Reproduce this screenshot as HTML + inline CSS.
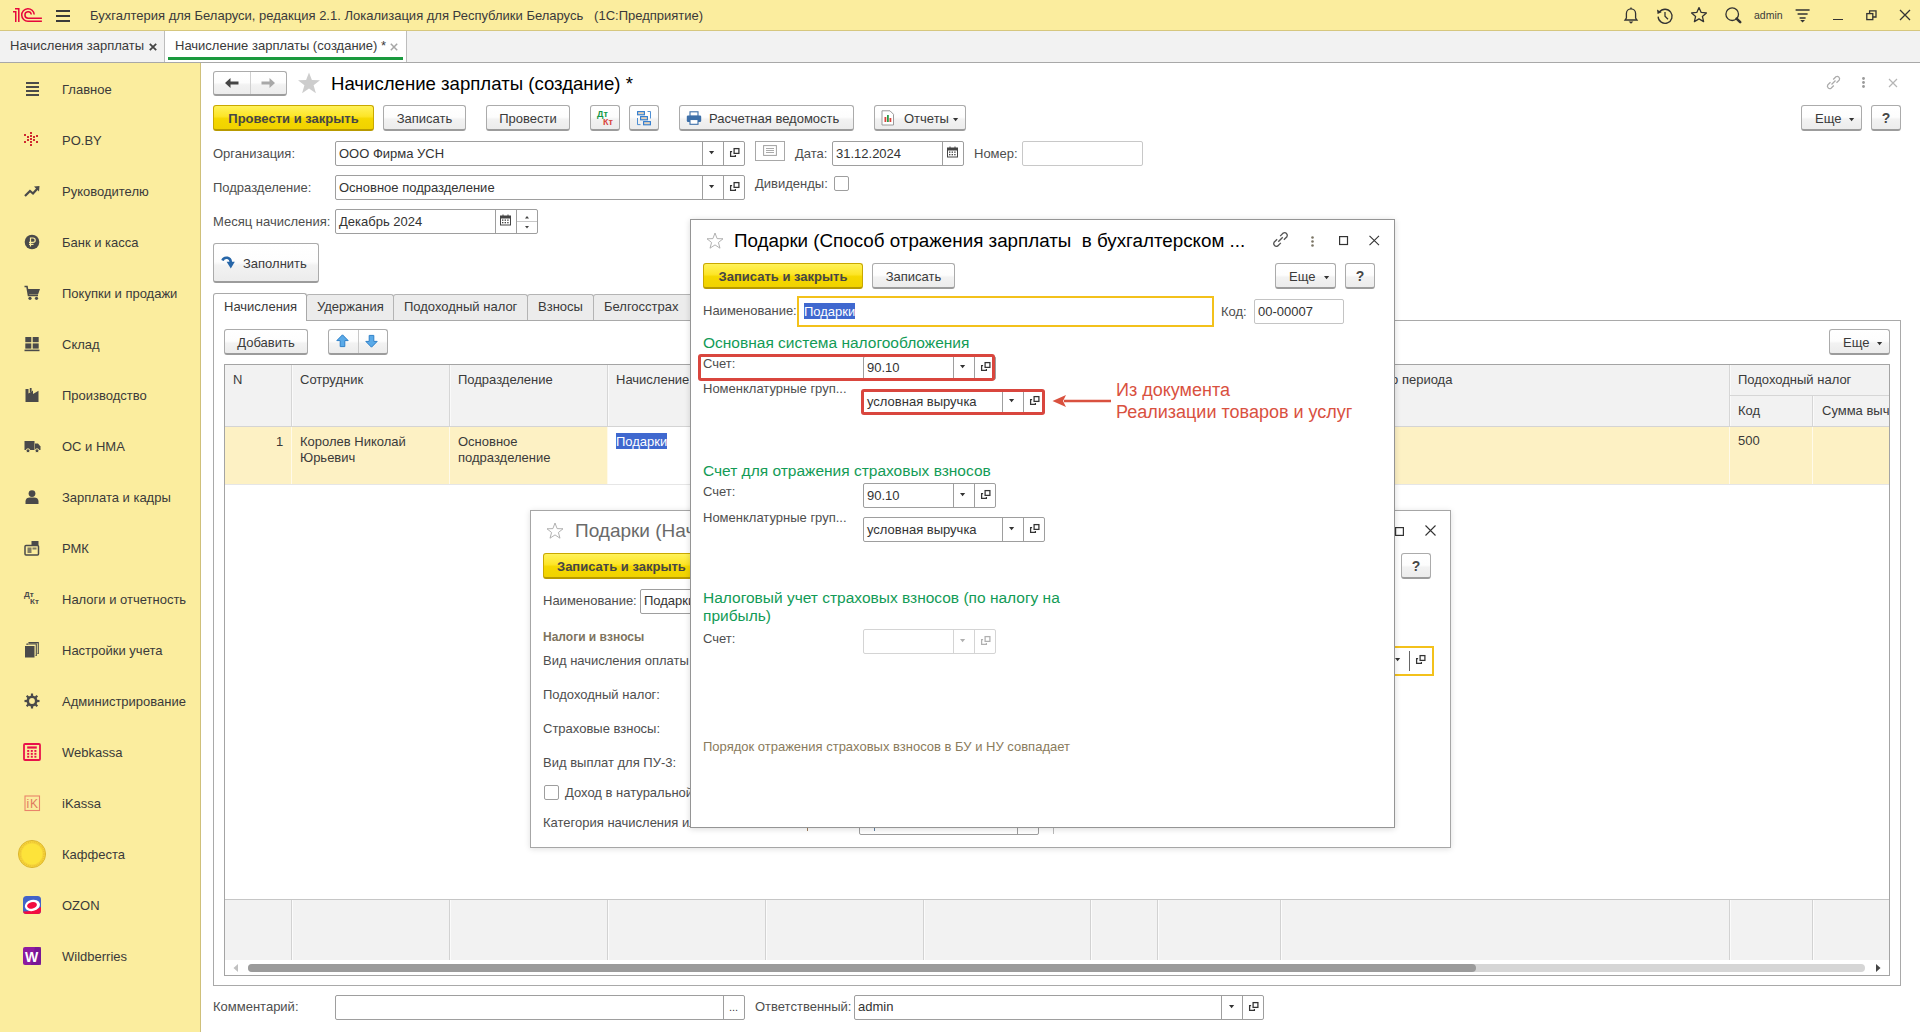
<!DOCTYPE html><html><head><meta charset="utf-8"><style>
*{box-sizing:border-box}
html,body{margin:0;padding:0}
body{width:1920px;height:1032px;position:relative;overflow:hidden;font-family:"Liberation Sans",sans-serif;font-size:13px;color:#333;background:#fff}
.a{position:absolute}
svg.a{overflow:visible}
.t{position:absolute;white-space:pre}
.btn{position:absolute;border:1px solid #ababab;border-bottom:2px solid #9c9c9c;border-radius:3px;background:linear-gradient(#ffffff 0%,#fdfdfd 48%,#f2f2f2 58%,#ececec 100%)}
.ybtn{position:absolute;border:1px solid #c9a800;border-bottom:2px solid #b89a00;border-radius:3px;background:linear-gradient(#fff25a 0%,#fde528 45%,#f5d800 55%,#f0d200 100%)}
</style></head><body>
<div class="a" style="left:0px;top:0px;width:1920px;height:30px;background:#fbed9e"></div>
<div class="a" style="left:0px;top:30px;width:1920px;height:1px;background:#d6c77e"></div>
<svg class="a" style="left:12px;top:7px;" width="32" height="17" viewBox="0 0 32 17"><g fill="none" stroke="#e6063c" stroke-width="1.5">
      <path d="M1 4.75 L3.75 4.75 L3.75 14.9"/><path d="M3 1.8 L6.8 1.8 L6.8 14.9"/>
      <path d="M22.2 7.5 A6.25 6.25 0 1 0 16 14.2 L29.9 14.2"/>
      <path d="M19.3 7.5 A3.2 3.2 0 1 0 16.1 11.2 L29.9 11.2"/>
    </g></svg>
<div class="a" style="left:56px;top:10px;width:14px;height:2px;background:#3a3a3a;height:1.6px"></div>
<div class="a" style="left:56px;top:15px;width:14px;height:2px;background:#3a3a3a;height:1.6px"></div>
<div class="a" style="left:56px;top:20px;width:14px;height:2px;background:#3a3a3a;height:1.6px"></div>
<div class="t" style="left:90px;top:8px;font-size:13px;line-height:15px;color:#3a3a3a;font-weight:normal;">Бухгалтерия для Беларуси, редакция 2.1. Локализация для Республики Беларусь   (1С:Предприятие)</div>
<svg class="a" style="left:1622px;top:6px;" width="18" height="18" viewBox="0 0 18 18"><g fill="none" stroke="#333" stroke-width="1.3"><path d="M3 14 L15 14 L13.6 12 L13.6 7.5 A4.6 4.6 0 0 0 4.4 7.5 L4.4 12 Z"/><path d="M9 1.5 L9 2.9"/></g><path d="M6.6 15.6 L11.4 15.6 L9 17.8 Z" fill="#333"/></svg>
<svg class="a" style="left:1656px;top:7px;" width="18" height="18" viewBox="0 0 18 18"><g fill="none" stroke="#333" stroke-width="1.3"><path d="M3.4 5.2 A7 7 0 1 1 2.1 9.6"/><path d="M9 5 L9 9.3 L12 12.2"/></g><path d="M1 2.6 L5.6 5.2 L1.6 7 Z" fill="#333"/></svg>
<svg class="a" style="left:1690px;top:6px;" width="18" height="18" viewBox="0 0 18 18"><g fill="none" stroke="#333" stroke-width="1.3" stroke-linejoin="round"><path d="M9 1.6 L11.2 6.4 L16.4 6.9 L12.4 10.4 L13.6 15.6 L9 12.9 L4.4 15.6 L5.6 10.4 L1.6 6.9 L6.8 6.4 Z"/></g></svg>
<svg class="a" style="left:1725px;top:7px;" width="18" height="18" viewBox="0 0 18 18"><g fill="none" stroke="#333" stroke-width="1.3"><circle cx="7.2" cy="7.2" r="6.3"/></g><path d="M11.6 11.6 L15.2 15.2" stroke="#333" stroke-width="2.6" stroke-linecap="round"/></svg>
<div class="t" style="left:1754px;top:9px;font-size:10.5px;line-height:12px;color:#3a3a3a;font-weight:normal;">admin</div>
<svg class="a" style="left:1795px;top:9px;" width="16" height="14" viewBox="0 0 16 14"><g fill="none" stroke="#333" stroke-width="1.3"><path d="M0.6 1 L14.6 1 M2.6 5 L12.6 5 M4.6 9 L10.6 9"/></g><path d="M5.2 11 L10 11 L7.6 13.6 Z" fill="#333"/></svg>
<div class="a" style="left:1833px;top:19px;width:10px;height:1px;background:#333;height:1.4px"></div>
<svg class="a" style="left:1866px;top:10px;" width="11" height="11" viewBox="0 0 11 11"><g fill="none" stroke="#333" stroke-width="1.3"><rect x="0.8" y="3.6" width="6" height="6"/><path d="M3.6 3.6 L3.6 0.8 L10 0.8 L10 7 L6.8 7"/></g></svg>
<svg class="a" style="left:1899px;top:9px;" width="12" height="12" viewBox="0 0 12 12"><g fill="none" stroke="#333" stroke-width="1.3"><path d="M1 1 L11 11 M11 1 L1 11"/></g></svg>
<div class="a" style="left:0px;top:31px;width:1920px;height:31px;background:#f2f2f2"></div>
<div class="a" style="left:0px;top:62px;width:1920px;height:1px;background:#a8a8a8"></div>
<div class="t" style="left:10px;top:38px;font-size:13px;line-height:15px;color:#3a3a3a;font-weight:normal;">Начисления зарплаты</div>
<svg class="a" style="left:149px;top:43px;" width="8" height="8" viewBox="0 0 8 8"><path d="M0.8 0.8 L7.2 7.2 M7.2 0.8 L0.8 7.2" stroke="#444" stroke-width="1.8"/></svg>
<div class="a" style="left:164px;top:31px;width:1px;height:31px;background:#bdbdbd"></div>
<div class="a" style="left:165px;top:31px;width:241px;height:31px;background:#fff"></div>
<div class="t" style="left:175px;top:38px;font-size:13px;line-height:15px;color:#3a3a3a;font-weight:normal;">Начисление зарплаты (создание) *</div>
<svg class="a" style="left:390px;top:43px;" width="8" height="8" viewBox="0 0 8 8"><path d="M0.8 0.8 L7.2 7.2 M7.2 0.8 L0.8 7.2" stroke="#a6a6a6" stroke-width="1.5"/></svg>
<div class="a" style="left:168px;top:57px;width:235px;height:3px;background:#1a9a3e"></div>
<div class="a" style="left:406px;top:31px;width:1px;height:31px;background:#bdbdbd"></div>
<div class="a" style="left:0px;top:63px;width:200px;height:969px;background:#fbed9e"></div>
<div class="a" style="left:200px;top:63px;width:1px;height:969px;background:#cfc07a"></div>
<div class="t" style="left:62px;top:82px;font-size:13px;line-height:15px;color:#3a3a3a;font-weight:normal;">Главное</div>
<div class="a" style="left:26px;top:82px;width:13px;height:2px;background:#4a4a4a"></div>
<div class="a" style="left:26px;top:86px;width:13px;height:2px;background:#4a4a4a"></div>
<div class="a" style="left:26px;top:90px;width:13px;height:2px;background:#4a4a4a"></div>
<div class="a" style="left:26px;top:94px;width:13px;height:2px;background:#4a4a4a"></div>
<div class="t" style="left:62px;top:133px;font-size:13px;line-height:15px;color:#3a3a3a;font-weight:normal;">PO.BY</div>
<svg class="a" style="left:20px;top:128px;" width="24" height="24" viewBox="0 0 24 24"><rect x="10" y="4" width="2" height="2" fill="#cf2b31"/><rect x="4" y="6" width="2" height="2" fill="#cf2b31"/><rect x="16" y="7" width="2" height="2" fill="#cf2b31"/><rect x="7" y="8" width="2" height="2" fill="#cf2b31"/><rect x="10" y="7" width="2" height="2" fill="#cf2b31"/><rect x="13" y="8" width="2" height="2" fill="#cf2b31"/><rect x="10" y="10" width="2" height="2" fill="#cf2b31"/><rect x="7" y="11" width="2" height="2" fill="#cf2b31"/><rect x="13" y="11" width="2" height="2" fill="#cf2b31"/><rect x="4" y="13" width="2" height="2" fill="#cf2b31"/><rect x="10" y="13" width="2" height="2" fill="#cf2b31"/><rect x="16" y="13" width="2" height="2" fill="#cf2b31"/><rect x="10" y="16" width="2" height="2" fill="#cf2b31"/></svg>
<div class="t" style="left:62px;top:184px;font-size:13px;line-height:15px;color:#3a3a3a;font-weight:normal;">Руководителю</div>
<svg class="a" style="left:24px;top:183px;" width="16" height="16" viewBox="0 0 16 16"><path d="M1 13 L6 8 L9 10.5 L13.5 5.5" fill="none" stroke="#4a4a4a" stroke-width="2.2"/><path d="M10 3.5 L15.5 3 L15 8.5 Z" fill="#4a4a4a"/></svg>
<div class="t" style="left:62px;top:235px;font-size:13px;line-height:15px;color:#3a3a3a;font-weight:normal;">Банк и касса</div>
<svg class="a" style="left:24px;top:234px;" width="16" height="16" viewBox="0 0 16 16"><circle cx="8" cy="8" r="7.3" fill="#4a4a4a"/><path d="M6.5 12.5 L6.5 4 L9 4 A2.2 2.2 0 0 1 9 8.4 L5 8.4 M5 10.4 L9.5 10.4" fill="none" stroke="#fbed9e" stroke-width="1.2"/></svg>
<div class="t" style="left:62px;top:286px;font-size:13px;line-height:15px;color:#3a3a3a;font-weight:normal;">Покупки и продажи</div>
<svg class="a" style="left:24px;top:285px;" width="17" height="16" viewBox="0 0 17 16"><path d="M0.5 1.5 L3 1.5 L4.5 10.5 L14 10.5" fill="none" stroke="#4a4a4a" stroke-width="1.6"/><path d="M3.5 4 L16 4 L14 9.5 L4.5 9.5 Z" fill="#4a4a4a"/><circle cx="6" cy="13.3" r="1.6" fill="#4a4a4a"/><circle cx="12.5" cy="13.3" r="1.6" fill="#4a4a4a"/></svg>
<div class="t" style="left:62px;top:337px;font-size:13px;line-height:15px;color:#3a3a3a;font-weight:normal;">Склад</div>
<svg class="a" style="left:24px;top:336px;" width="16" height="16" viewBox="0 0 16 16"><rect x="1.3" y="1" width="6" height="5.2" fill="#4a4a4a"/><rect x="8.7" y="1" width="6" height="5.2" fill="#4a4a4a"/><rect x="1.3" y="7.4" width="6" height="5.2" fill="#4a4a4a"/><rect x="8.7" y="7.4" width="6" height="5.2" fill="#4a4a4a"/><rect x="0.5" y="13.6" width="15" height="1.6" fill="#4a4a4a"/></svg>
<div class="t" style="left:62px;top:388px;font-size:13px;line-height:15px;color:#3a3a3a;font-weight:normal;">Производство</div>
<svg class="a" style="left:24px;top:387px;" width="16" height="16" viewBox="0 0 16 16"><path d="M1.5 15 L1.5 2 L4.5 2 L4.5 6.5 L9 3.5 L9 7 L14.5 3.8 L14.5 15 Z" fill="#4a4a4a"/><path d="M5.8 1 L7.6 1 L7.6 4.4 L5.8 5.5 Z" fill="#4a4a4a"/></svg>
<div class="t" style="left:62px;top:439px;font-size:13px;line-height:15px;color:#3a3a3a;font-weight:normal;">ОС и НМА</div>
<svg class="a" style="left:24px;top:438px;" width="17" height="16" viewBox="0 0 17 16"><rect x="0.5" y="3" width="10" height="9" fill="#4a4a4a"/><path d="M11 5.5 L14 5.5 L16.5 8.5 L16.5 12 L11 12 Z" fill="#4a4a4a"/><circle cx="4" cy="12.8" r="2" fill="#4a4a4a" stroke="#fbed9e" stroke-width="1"/><circle cx="13" cy="12.8" r="2" fill="#4a4a4a" stroke="#fbed9e" stroke-width="1"/></svg>
<div class="t" style="left:62px;top:490px;font-size:13px;line-height:15px;color:#3a3a3a;font-weight:normal;">Зарплата и кадры</div>
<svg class="a" style="left:24px;top:489px;" width="16" height="16" viewBox="0 0 16 16"><circle cx="8" cy="4.6" r="3.4" fill="#4a4a4a"/><path d="M1.5 15 L1.5 12 Q2 8.6 6 8.6 L10 8.6 Q14 8.6 14.5 12 L14.5 15 Z" fill="#4a4a4a"/></svg>
<div class="t" style="left:62px;top:541px;font-size:13px;line-height:15px;color:#3a3a3a;font-weight:normal;">РМК</div>
<svg class="a" style="left:24px;top:540px;" width="16" height="16" viewBox="0 0 16 16"><rect x="1" y="5.5" width="13.5" height="9.5" rx="1" fill="none" stroke="#4a4a4a" stroke-width="1.5"/><rect x="7.5" y="1" width="7" height="4" fill="#4a4a4a"/><rect x="3.5" y="7.5" width="4" height="5.5" fill="#4a4a4a" opacity=".7"/><rect x="8.5" y="7.5" width="4" height="2" fill="#4a4a4a" opacity=".7"/></svg>
<div class="t" style="left:62px;top:592px;font-size:13px;line-height:15px;color:#3a3a3a;font-weight:normal;">Налоги и отчетность</div>
<div class="t" style="left:24px;top:591px;font-size:8px;line-height:8px;font-weight:bold;color:#4a4a4a">Дт</div>
<div class="t" style="left:30px;top:598px;font-size:8px;line-height:8px;font-weight:bold;color:#4a4a4a">Кт</div>
<div class="t" style="left:62px;top:643px;font-size:13px;line-height:15px;color:#3a3a3a;font-weight:normal;">Настройки учета</div>
<svg class="a" style="left:24px;top:642px;" width="16" height="16" viewBox="0 0 16 16"><rect x="1" y="4" width="9.5" height="11.5" fill="#4a4a4a"/><path d="M3 3 L3 2 L12.3 2 L12.3 13.5 L11.5 13.5 M5 1 L5 0.6 L14.3 0.6 L14.3 11.5 L13.4 11.5" fill="none" stroke="#4a4a4a" stroke-width="1.1"/></svg>
<div class="t" style="left:62px;top:694px;font-size:13px;line-height:15px;color:#3a3a3a;font-weight:normal;">Администрирование</div>
<svg class="a" style="left:24px;top:693px;" width="16" height="16" viewBox="0 0 16 16"><circle cx="8" cy="8" r="4.2" fill="none" stroke="#4a4a4a" stroke-width="2.6"/><rect x="6.9" y="0.5" width="2.2" height="3.5" fill="#4a4a4a" transform="rotate(0 8 8)"/><rect x="6.9" y="0.5" width="2.2" height="3.5" fill="#4a4a4a" transform="rotate(45 8 8)"/><rect x="6.9" y="0.5" width="2.2" height="3.5" fill="#4a4a4a" transform="rotate(90 8 8)"/><rect x="6.9" y="0.5" width="2.2" height="3.5" fill="#4a4a4a" transform="rotate(135 8 8)"/><rect x="6.9" y="0.5" width="2.2" height="3.5" fill="#4a4a4a" transform="rotate(180 8 8)"/><rect x="6.9" y="0.5" width="2.2" height="3.5" fill="#4a4a4a" transform="rotate(225 8 8)"/><rect x="6.9" y="0.5" width="2.2" height="3.5" fill="#4a4a4a" transform="rotate(270 8 8)"/><rect x="6.9" y="0.5" width="2.2" height="3.5" fill="#4a4a4a" transform="rotate(315 8 8)"/></svg>
<div class="t" style="left:62px;top:745px;font-size:13px;line-height:15px;color:#3a3a3a;font-weight:normal;">Webkassa</div>
<svg class="a" style="left:23px;top:743px;" width="18" height="18" viewBox="0 0 18 18"><rect x="1" y="1" width="16" height="16" rx="1" fill="none" stroke="#e8124a" stroke-width="1.8"/><rect x="4.2" y="3.4" width="9.6" height="2.2" fill="#e8124a"/><rect x="4.2" y="7.0" width="2" height="1.9" fill="#e8124a"/><rect x="7.800000000000001" y="7.0" width="2" height="1.9" fill="#e8124a"/><rect x="11.4" y="7.0" width="2" height="1.9" fill="#e8124a"/><rect x="4.2" y="9.9" width="2" height="1.9" fill="#e8124a"/><rect x="7.800000000000001" y="9.9" width="2" height="1.9" fill="#e8124a"/><rect x="11.4" y="9.9" width="2" height="1.9" fill="#e8124a"/><rect x="4.2" y="12.8" width="2" height="1.9" fill="#e8124a"/><rect x="7.800000000000001" y="12.8" width="2" height="1.9" fill="#e8124a"/><rect x="11.4" y="12.8" width="2" height="1.9" fill="#e8124a"/></svg>
<div class="t" style="left:62px;top:796px;font-size:13px;line-height:15px;color:#3a3a3a;font-weight:normal;">iKassa</div>
<svg class="a" style="left:24px;top:795px;" width="16" height="16" viewBox="0 0 16 16"><rect x="1" y="1" width="14.5" height="14.5" fill="none" stroke="#e9846a" stroke-width="1.1"/><text x="2.5" y="13" font-family="Liberation Sans" font-size="12" fill="#e07a60">i</text><text x="6" y="13" font-family="Liberation Sans" font-size="12" fill="#e07a60">K</text></svg>
<div class="t" style="left:62px;top:847px;font-size:13px;line-height:15px;color:#3a3a3a;font-weight:normal;">Каффеста</div>
<svg class="a" style="left:17px;top:839px;" width="30" height="30" viewBox="0 0 30 30"><circle cx="15" cy="15" r="13.6" fill="#f6d43a" stroke="#d9b22a" stroke-width="0.9"/><circle cx="15" cy="15" r="10.5" fill="#fde33a"/><circle cx="15" cy="15" r="12" fill="none" stroke="#e9c130" stroke-width="1.2" stroke-dasharray="1 1"/></svg>
<div class="t" style="left:62px;top:898px;font-size:13px;line-height:15px;color:#3a3a3a;font-weight:normal;">OZON</div>
<svg class="a" style="left:20px;top:893px;" width="24" height="24" viewBox="0 0 24 24"><clipPath id="oz"><rect x="3" y="3" width="18" height="18" rx="3.5"/></clipPath><g clip-path="url(#oz)"><rect x="0" y="0" width="24" height="24" fill="#4263c8"/><path d="M0 24 L0 18.5 Q12 19 21 14 L24 12 L24 24 Z" fill="#f20d40"/><ellipse cx="12.4" cy="12.4" rx="7.6" ry="5.6" transform="rotate(-14 12.4 12.4)" fill="#fff"/><ellipse cx="12" cy="12.4" rx="5" ry="3.2" transform="rotate(-14 12 12.4)" fill="#f20d40"/></g></svg>
<div class="t" style="left:62px;top:949px;font-size:13px;line-height:15px;color:#3a3a3a;font-weight:normal;">Wildberries</div>
<svg class="a" style="left:23px;top:947px;" width="18" height="18" viewBox="0 0 18 18"><rect x="0" y="0" width="18" height="18" rx="2" fill="#8d1aa0"/><path d="M12 0 L18 0 L18 18 L8 18 Z" fill="#6a148f" opacity=".6"/><text x="2" y="15" font-family="Liberation Sans" font-weight="bold" font-size="14" fill="#fff">W</text></svg>
<div class="btn" style="left:213px;top:71px;width:74px;height:25px"></div>
<div class="a" style="left:250px;top:72px;width:1px;height:22px;background:#d0d0d0"></div>
<svg class="a" style="left:224px;top:77px;" width="16" height="12" viewBox="0 0 16 12"><path d="M1 6 L6.5 1 L6.5 4.6 L14.5 4.6 L14.5 7.4 L6.5 7.4 L6.5 11 Z" fill="#454545"/></svg>
<svg class="a" style="left:260px;top:77px;" width="16" height="12" viewBox="0 0 16 12"><path d="M15 6 L9.5 1 L9.5 4.6 L1.5 4.6 L1.5 7.4 L9.5 7.4 L9.5 11 Z" fill="#a8a8a8"/></svg>
<svg class="a" style="left:297px;top:72px;" width="24" height="22" viewBox="0 0 24 22"><path d="M12 0.5 L14.9 8 L23 8.3 L16.6 13.3 L18.9 21.2 L12 16.6 L5.1 21.2 L7.4 13.3 L1 8.3 L9.1 8 Z" fill="#cdcdcd"/></svg>
<div class="t" style="left:331px;top:73px;font-size:18.6px;line-height:21px;color:#000;font-weight:normal;">Начисление зарплаты (создание) *</div>
<svg class="a" style="left:1825px;top:74px;" width="17" height="17" viewBox="0 0 17 17"><g fill="none" stroke="#ababab" stroke-width="1.3"><path d="M6.5 10.5 L10.5 6.5"/><path d="M5.5 8.2 L2.8 10.9 A2.4 2.4 0 0 0 6.1 14.2 L8.8 11.5"/><path d="M8.2 5.5 L10.9 2.8 A2.4 2.4 0 0 1 14.2 6.1 L11.5 8.8"/></g></svg>
<svg class="a" style="left:1862px;top:77px;" width="3" height="3" viewBox="0 0 3 3"><circle cx="1.5" cy="1.5" r="1.4" fill="#9a9a9a"/></svg>
<svg class="a" style="left:1862px;top:81px;" width="3" height="3" viewBox="0 0 3 3"><circle cx="1.5" cy="1.5" r="1.4" fill="#9a9a9a"/></svg>
<svg class="a" style="left:1862px;top:85px;" width="3" height="3" viewBox="0 0 3 3"><circle cx="1.5" cy="1.5" r="1.4" fill="#9a9a9a"/></svg>
<svg class="a" style="left:1888px;top:78px;" width="10" height="10" viewBox="0 0 10 10"><path d="M1 1 L9 9 M9 1 L1 9" stroke="#b5b5b5" stroke-width="1.2"/></svg>
<div class="ybtn" style="left:213px;top:105px;width:161px;height:26px"></div>
<div class="t" style="left:213px;top:111px;width:161px;text-align:center;font-size:13px;line-height:15px;font-weight:bold;color:#464646">Провести и закрыть</div>
<div class="btn" style="left:383px;top:105px;width:83px;height:26px"></div>
<div class="t" style="left:383px;top:111px;width:83px;text-align:center;font-size:13px;line-height:15px;font-weight:normal;color:#3a3a3a">Записать</div>
<div class="btn" style="left:486px;top:105px;width:84px;height:26px"></div>
<div class="t" style="left:486px;top:111px;width:84px;text-align:center;font-size:13px;line-height:15px;font-weight:normal;color:#3a3a3a">Провести</div>
<div class="btn" style="left:590px;top:105px;width:30px;height:26px"></div>
<div class="t" style="left:597px;top:109px;font-size:9px;line-height:10px;font-weight:bold;color:#139848">Дт</div>
<div class="t" style="left:603px;top:117px;font-size:9px;line-height:10px;font-weight:bold;color:#d9453d">Кт</div>
<div class="btn" style="left:629px;top:105px;width:30px;height:26px"></div>
<svg class="a" style="left:636px;top:110px;" width="16" height="16" viewBox="0 0 16 16"><g fill="#e3d2bb" stroke="#2e7bcf" stroke-width="1.1">
      <rect x="1.6" y="1.6" width="6.8" height="3.2"/><rect x="4.6" y="6.6" width="6.8" height="3.2"/><rect x="7.6" y="11.6" width="6.8" height="3.2"/></g>
      <g fill="none" stroke="#3a82cf" stroke-width="0.9"><path d="M11.5 1.5 L14.5 1.5 L14.5 8.5"/><path d="M1.5 8 L1.5 14.6 L4.5 14.6"/></g></svg>
<div class="btn" style="left:679px;top:105px;width:175px;height:26px"></div>
<div class="t" style="left:709px;top:111px;font-size:13px;line-height:15px;color:#3a3a3a;font-weight:normal;">Расчетная ведомость</div>
<svg class="a" style="left:686px;top:111px;" width="16" height="14" viewBox="0 0 16 14"><rect x="4" y="0.8" width="8" height="4.5" fill="#fff" stroke="#3d6fa8" stroke-width="1.1"/>
      <rect x="0.8" y="4.5" width="14.4" height="6.5" rx="1.2" fill="#3d6fa8"/>
      <rect x="4" y="8.5" width="8" height="4.8" fill="#fff" stroke="#3d6fa8" stroke-width="1.1"/></svg>
<div class="btn" style="left:874px;top:105px;width:92px;height:26px"></div>
<div class="t" style="left:904px;top:111px;font-size:13px;line-height:15px;color:#3a3a3a;font-weight:normal;">Отчеты</div>
<svg class="a" style="left:881px;top:110px;" width="14" height="16" viewBox="0 0 14 16"><path d="M1 0.8 L9 0.8 L12.5 4.3 L12.5 15 L1 15 Z" fill="#fff" stroke="#9a9a9a" stroke-width="1"/>
      <rect x="3.5" y="7" width="1.8" height="5" fill="#d9433b"/><rect x="6" y="5" width="1.8" height="7" fill="#2b9c4a"/><rect x="8.5" y="8" width="1.8" height="4" fill="#d9433b"/></svg>
<svg class="a" style="left:953px;top:118px;" width="6" height="4" viewBox="0 0 6 4"><path d="M0 0 L5.2 0 L2.6 3.2 Z" fill="#333"/></svg>
<div class="btn" style="left:1801px;top:105px;width:61px;height:26px"></div>
<div class="t" style="left:1815px;top:111px;font-size:13px;line-height:15px;color:#3a3a3a;font-weight:normal;">Еще</div>
<svg class="a" style="left:1849px;top:118px;" width="6" height="4" viewBox="0 0 6 4"><path d="M0 0 L5.2 0 L2.6 3.2 Z" fill="#333"/></svg>
<div class="btn" style="left:1871px;top:105px;width:30px;height:26px"></div>
<div class="t" style="left:1871px;top:111px;width:30px;text-align:center;font-size:14px;line-height:15px;font-weight:bold;color:#464646">?</div>
<div class="t" style="left:213px;top:146px;font-size:13px;line-height:15px;color:#4e4e4e;font-weight:normal;">Организация:</div>
<div class="a" style="left:335px;top:141px;width:410px;height:25px;border:1px solid #9e9e9e;border-radius:2px;background:#fff"></div>
<div class="a" style="left:702px;top:142px;width:1px;height:23px;background:#9e9e9e"></div>
<div class="a" style="left:723px;top:142px;width:1px;height:23px;background:#9e9e9e"></div>
<div class="t" style="left:339px;top:146px;font-size:13px;line-height:15px;color:#333;font-weight:normal;">ООО Фирма УСН</div>
<svg class="a" style="left:709px;top:151px;" width="6" height="4" viewBox="0 0 6 4"><path d="M0 0 L5.2 0 L2.6 3.2 Z" fill="#333"/></svg>
<svg class="a" style="left:730px;top:148px;" width="11" height="10" viewBox="0 0 11 10"><g fill="none" stroke="#333" stroke-width="1.25"><rect x="4.1" y="0.6" width="4.8" height="4.8"/><path d="M2.1 3.6 L0.6 3.6 L0.6 8.4 L5.4 8.4 L5.4 7"/></g></svg>
<div class="a" style="left:755px;top:141px;width:30px;height:20px;border:1px solid #a8a8a8;background:#fff"></div>
<svg class="a" style="left:763px;top:145px;" width="14" height="11" viewBox="0 0 14 11"><rect x="0.6" y="0.6" width="12.8" height="9.8" fill="none" stroke="#a0a0a0" stroke-width="1"/><path d="M3 3.5 L11 3.5 M3 5.5 L11 5.5 M3 7.5 L11 7.5" stroke="#a0a0a0" stroke-width="0.9"/></svg>
<div class="t" style="left:795px;top:146px;font-size:13px;line-height:15px;color:#4e4e4e;font-weight:normal;">Дата:</div>
<div class="a" style="left:832px;top:141px;width:132px;height:25px;border:1px solid #9e9e9e;border-radius:2px;background:#fff"></div>
<div class="a" style="left:942px;top:142px;width:1px;height:23px;background:#9e9e9e"></div>
<div class="t" style="left:836px;top:146px;font-size:13px;line-height:15px;color:#333;font-weight:normal;">31.12.2024</div>
<svg class="a" style="left:947px;top:146px;" width="12" height="12" viewBox="0 0 12 12"><rect x="0.5" y="2" width="10" height="9" fill="none" stroke="#444" stroke-width="1"/><rect x="0.5" y="2" width="10" height="2.5" fill="#444"/><path d="M3 0.5 L3 2.5 M8 0.5 L8 2.5" stroke="#444" stroke-width="1"/><g fill="#444"><rect x="2" y="5.5" width="1.4" height="1.3"/><rect x="4.6" y="5.5" width="1.4" height="1.3"/><rect x="7.2" y="5.5" width="1.4" height="1.3"/><rect x="2" y="8" width="1.4" height="1.3"/><rect x="4.6" y="8" width="1.4" height="1.3"/><rect x="7.2" y="8" width="1.4" height="1.3"/></g></svg>
<div class="t" style="left:974px;top:146px;font-size:13px;line-height:15px;color:#4e4e4e;font-weight:normal;">Номер:</div>
<div class="a" style="left:1022px;top:141px;width:121px;height:25px;border:1px solid #c8c8c8;border-radius:2px;background:#fff"></div>
<div class="t" style="left:213px;top:180px;font-size:13px;line-height:15px;color:#4e4e4e;font-weight:normal;">Подразделение:</div>
<div class="a" style="left:335px;top:175px;width:410px;height:25px;border:1px solid #9e9e9e;border-radius:2px;background:#fff"></div>
<div class="a" style="left:702px;top:176px;width:1px;height:23px;background:#9e9e9e"></div>
<div class="a" style="left:723px;top:176px;width:1px;height:23px;background:#9e9e9e"></div>
<div class="t" style="left:339px;top:180px;font-size:13px;line-height:15px;color:#333;font-weight:normal;">Основное подразделение</div>
<svg class="a" style="left:709px;top:185px;" width="6" height="4" viewBox="0 0 6 4"><path d="M0 0 L5.2 0 L2.6 3.2 Z" fill="#333"/></svg>
<svg class="a" style="left:730px;top:182px;" width="11" height="10" viewBox="0 0 11 10"><g fill="none" stroke="#333" stroke-width="1.25"><rect x="4.1" y="0.6" width="4.8" height="4.8"/><path d="M2.1 3.6 L0.6 3.6 L0.6 8.4 L5.4 8.4 L5.4 7"/></g></svg>
<div class="t" style="left:755px;top:176px;font-size:13px;line-height:15px;color:#4e4e4e;font-weight:normal;">Дивиденды:</div>
<div class="a" style="left:834px;top:176px;width:15px;height:15px;border:1px solid #9e9e9e;border-radius:2px;background:#fff"></div>
<div class="t" style="left:213px;top:214px;font-size:13px;line-height:15px;color:#4e4e4e;font-weight:normal;">Месяц начисления:</div>
<div class="a" style="left:335px;top:209px;width:203px;height:25px;border:1px solid #9e9e9e;border-radius:2px;background:#fff"></div>
<div class="a" style="left:495px;top:210px;width:1px;height:23px;background:#9e9e9e"></div>
<div class="a" style="left:516px;top:210px;width:1px;height:23px;background:#9e9e9e"></div>
<div class="t" style="left:339px;top:214px;font-size:13px;line-height:15px;color:#333;font-weight:normal;">Декабрь 2024</div>
<svg class="a" style="left:500px;top:214px;" width="12" height="12" viewBox="0 0 12 12"><rect x="0.5" y="2" width="10" height="9" fill="none" stroke="#444" stroke-width="1"/><rect x="0.5" y="2" width="10" height="2.5" fill="#444"/><path d="M3 0.5 L3 2.5 M8 0.5 L8 2.5" stroke="#444" stroke-width="1"/><g fill="#444"><rect x="2" y="5.5" width="1.4" height="1.3"/><rect x="4.6" y="5.5" width="1.4" height="1.3"/><rect x="7.2" y="5.5" width="1.4" height="1.3"/><rect x="2" y="8" width="1.4" height="1.3"/><rect x="4.6" y="8" width="1.4" height="1.3"/><rect x="7.2" y="8" width="1.4" height="1.3"/></g></svg>
<div class="a" style="left:517px;top:221px;width:20px;height:1px;background:#c8c8c8"></div>
<svg class="a" style="left:525px;top:216px;" width="4" height="3" viewBox="0 0 4 3"><path d="M0 2.6 L4 2.6 L2 0 Z" fill="#444"/></svg>
<svg class="a" style="left:525px;top:226px;" width="4" height="3" viewBox="0 0 4 3"><path d="M0 0 L4 0 L2 2.6 Z" fill="#444"/></svg>
<div class="btn" style="left:213px;top:243px;width:106px;height:40px"></div>
<div class="t" style="left:243px;top:256px;font-size:13px;line-height:15px;color:#3a3a3a;font-weight:normal;">Заполнить</div>
<svg class="a" style="left:221px;top:256px;" width="15" height="14" viewBox="0 0 15 14"><path d="M1.5 4.5 Q2.5 1.2 6.5 1.8 Q9.5 2.5 9.8 6" fill="none" stroke="#2766a8" stroke-width="2.6"/><path d="M5.6 5.8 L13.8 5.8 L9.8 12.5 Z" fill="#2766a8"/></svg>
<div class="a" style="left:306px;top:320px;width:1595px;height:1px;background:#a9a9a9"></div>
<div class="a" style="left:306px;top:294px;width:88px;height:26px;border:1px solid #b4b4b4;border-bottom:none;border-radius:3px 3px 0 0;background:#ececec"></div>
<div class="t" style="left:317px;top:299px;font-size:13px;line-height:15px;color:#3a3a3a;font-weight:normal;">Удержания</div>
<div class="a" style="left:393px;top:294px;width:135px;height:26px;border:1px solid #b4b4b4;border-bottom:none;border-radius:3px 3px 0 0;background:#ececec"></div>
<div class="t" style="left:404px;top:299px;font-size:13px;line-height:15px;color:#3a3a3a;font-weight:normal;">Подоходный налог</div>
<div class="a" style="left:527px;top:294px;width:67px;height:26px;border:1px solid #b4b4b4;border-bottom:none;border-radius:3px 3px 0 0;background:#ececec"></div>
<div class="t" style="left:538px;top:299px;font-size:13px;line-height:15px;color:#3a3a3a;font-weight:normal;">Взносы</div>
<div class="a" style="left:593px;top:294px;width:128px;height:26px;border:1px solid #b4b4b4;border-bottom:none;border-radius:3px 3px 0 0;background:#ececec"></div>
<div class="t" style="left:604px;top:299px;font-size:13px;line-height:15px;color:#3a3a3a;font-weight:normal;">Белгосстрах</div>
<div class="a" style="left:213px;top:293px;width:94px;height:28px;border:1px solid #a9a9a9;border-bottom:none;border-radius:3px 3px 0 0;background:#fff"></div>
<div class="t" style="left:224px;top:299px;font-size:13px;line-height:15px;color:#3a3a3a;font-weight:normal;">Начисления</div>
<div class="a" style="left:213px;top:320px;width:1px;height:666px;background:#a9a9a9"></div>
<div class="a" style="left:1900px;top:320px;width:1px;height:666px;background:#a9a9a9"></div>
<div class="a" style="left:213px;top:985px;width:1688px;height:1px;background:#a9a9a9"></div>
<div class="btn" style="left:224px;top:329px;width:84px;height:26px"></div>
<div class="t" style="left:224px;top:335px;width:84px;text-align:center;font-size:13px;line-height:15px;font-weight:normal;color:#3a3a3a">Добавить</div>
<div class="btn" style="left:328px;top:329px;width:60px;height:26px"></div>
<div class="a" style="left:358px;top:330px;width:1px;height:23px;background:#c8c8c8"></div>
<svg class="a" style="left:336px;top:334px;" width="13" height="14" viewBox="0 0 13 14"><path d="M6.5 0.8 L12.2 6.6 L8.8 6.6 L8.8 12.6 L4.2 12.6 L4.2 6.6 L0.8 6.6 Z" fill="#5aaae8" stroke="#2f80c8" stroke-width="1"/></svg>
<svg class="a" style="left:365px;top:334px;" width="13" height="14" viewBox="0 0 13 14"><path d="M6.5 13.2 L12.2 7.4 L8.8 7.4 L8.8 1.4 L4.2 1.4 L4.2 7.4 L0.8 7.4 Z" fill="#5aaae8" stroke="#2f80c8" stroke-width="1"/></svg>
<div class="btn" style="left:1829px;top:329px;width:61px;height:26px"></div>
<div class="t" style="left:1843px;top:335px;font-size:13px;line-height:15px;color:#3a3a3a;font-weight:normal;">Еще</div>
<svg class="a" style="left:1877px;top:342px;" width="6" height="4" viewBox="0 0 6 4"><path d="M0 0 L5.2 0 L2.6 3.2 Z" fill="#333"/></svg>
<div class="a" style="left:224px;top:364px;width:1666px;height:612px;border:1px solid #a4a4a4;background:#fff"></div>
<div class="a" style="left:225px;top:365px;width:1664px;height:61px;background:#f2f2f2"></div>
<div class="a" style="left:225px;top:426px;width:1664px;height:1px;background:#d4d4d4"></div>
<div class="a" style="left:291px;top:365px;width:1px;height:61px;background:#d6d6d6"></div>
<div class="a" style="left:292px;top:365px;width:1px;height:61px;background:#fafafa"></div>
<div class="a" style="left:449px;top:365px;width:1px;height:61px;background:#d6d6d6"></div>
<div class="a" style="left:450px;top:365px;width:1px;height:61px;background:#fafafa"></div>
<div class="a" style="left:607px;top:365px;width:1px;height:61px;background:#d6d6d6"></div>
<div class="a" style="left:608px;top:365px;width:1px;height:61px;background:#fafafa"></div>
<div class="a" style="left:1729px;top:365px;width:1px;height:61px;background:#d6d6d6"></div>
<div class="a" style="left:1730px;top:365px;width:1px;height:61px;background:#fafafa"></div>
<div class="a" style="left:1730px;top:395px;width:159px;height:1px;background:#d6d6d6"></div>
<div class="a" style="left:1812px;top:396px;width:1px;height:30px;background:#d6d6d6"></div>
<div class="a" style="left:1813px;top:396px;width:1px;height:30px;background:#fafafa"></div>
<div class="t" style="left:233px;top:372px;font-size:13px;line-height:15px;color:#3a3a3a;font-weight:normal;">N</div>
<div class="t" style="left:300px;top:372px;font-size:13px;line-height:15px;color:#3a3a3a;font-weight:normal;">Сотрудник</div>
<div class="t" style="left:458px;top:372px;font-size:13px;line-height:15px;color:#3a3a3a;font-weight:normal;">Подразделение</div>
<div class="t" style="left:616px;top:372px;font-size:13px;line-height:15px;color:#3a3a3a;font-weight:normal;">Начисление</div>
<div class="t" style="left:1339px;top:372px;font-size:13px;line-height:15px;color:#3a3a3a;font-weight:normal;">Сумма до периода</div>
<div class="t" style="left:1738px;top:372px;font-size:13px;line-height:15px;color:#3a3a3a;font-weight:normal;">Подоходный налог</div>
<div class="t" style="left:1738px;top:403px;font-size:13px;line-height:15px;color:#3a3a3a;font-weight:normal;">Код</div>
<div class="t" style="left:1822px;top:403px;font-size:13px;line-height:15px;color:#3a3a3a;font-weight:normal;">Сумма выч</div>
<div class="a" style="left:1889px;top:365px;width:1px;height:610px;background:#a4a4a4"></div>
<div class="a" style="left:225px;top:427px;width:1664px;height:57px;background:#fdf1c4"></div>
<div class="a" style="left:607px;top:427px;width:159px;height:57px;background:#fff"></div>
<div class="a" style="left:291px;top:427px;width:1px;height:57px;background:#fffaea"></div>
<div class="a" style="left:449px;top:427px;width:1px;height:57px;background:#fffaea"></div>
<div class="a" style="left:607px;top:427px;width:1px;height:57px;background:#fffaea"></div>
<div class="a" style="left:765px;top:427px;width:1px;height:57px;background:#fffaea"></div>
<div class="a" style="left:1729px;top:427px;width:1px;height:57px;background:#fffaea"></div>
<div class="a" style="left:1812px;top:427px;width:1px;height:57px;background:#fffaea"></div>
<div class="a" style="left:225px;top:484px;width:1664px;height:1px;background:#e6e6e6"></div>
<div class="t" style="left:276px;top:434px;font-size:13px;line-height:15px;color:#3a3a3a;font-weight:normal;">1</div>
<div class="t" style="left:300px;top:434px;font-size:13px;line-height:15px;color:#3a3a3a;font-weight:normal;">Королев Николай</div>
<div class="t" style="left:300px;top:450px;font-size:13px;line-height:15px;color:#3a3a3a;font-weight:normal;">Юрьевич</div>
<div class="t" style="left:458px;top:434px;font-size:13px;line-height:15px;color:#3a3a3a;font-weight:normal;">Основное</div>
<div class="t" style="left:458px;top:450px;font-size:13px;line-height:15px;color:#3a3a3a;font-weight:normal;">подразделение</div>
<div class="a" style="left:616px;top:433px;width:51px;height:16px;background:#3f68cf"></div>
<div class="t" style="left:616px;top:434px;font-size:13px;line-height:15px;color:#fff;font-weight:normal;">Подарки</div>
<div class="t" style="left:1738px;top:433px;font-size:13px;line-height:15px;color:#3a3a3a;font-weight:normal;">500</div>
<div class="a" style="left:225px;top:899px;width:1664px;height:1px;background:#c6c6c6"></div>
<div class="a" style="left:225px;top:900px;width:1664px;height:60px;background:#f2f2f2"></div>
<div class="a" style="left:291px;top:900px;width:1px;height:60px;background:#d2d2d2"></div>
<div class="a" style="left:292px;top:900px;width:1px;height:60px;background:#fbfbfb"></div>
<div class="a" style="left:449px;top:900px;width:1px;height:60px;background:#d2d2d2"></div>
<div class="a" style="left:450px;top:900px;width:1px;height:60px;background:#fbfbfb"></div>
<div class="a" style="left:607px;top:900px;width:1px;height:60px;background:#d2d2d2"></div>
<div class="a" style="left:608px;top:900px;width:1px;height:60px;background:#fbfbfb"></div>
<div class="a" style="left:765px;top:900px;width:1px;height:60px;background:#d2d2d2"></div>
<div class="a" style="left:766px;top:900px;width:1px;height:60px;background:#fbfbfb"></div>
<div class="a" style="left:923px;top:900px;width:1px;height:60px;background:#d2d2d2"></div>
<div class="a" style="left:924px;top:900px;width:1px;height:60px;background:#fbfbfb"></div>
<div class="a" style="left:1090px;top:900px;width:1px;height:60px;background:#d2d2d2"></div>
<div class="a" style="left:1091px;top:900px;width:1px;height:60px;background:#fbfbfb"></div>
<div class="a" style="left:1157px;top:900px;width:1px;height:60px;background:#d2d2d2"></div>
<div class="a" style="left:1158px;top:900px;width:1px;height:60px;background:#fbfbfb"></div>
<div class="a" style="left:1280px;top:900px;width:1px;height:60px;background:#d2d2d2"></div>
<div class="a" style="left:1281px;top:900px;width:1px;height:60px;background:#fbfbfb"></div>
<div class="a" style="left:1729px;top:900px;width:1px;height:60px;background:#d2d2d2"></div>
<div class="a" style="left:1730px;top:900px;width:1px;height:60px;background:#fbfbfb"></div>
<div class="a" style="left:1812px;top:900px;width:1px;height:60px;background:#d2d2d2"></div>
<div class="a" style="left:1813px;top:900px;width:1px;height:60px;background:#fbfbfb"></div>
<svg class="a" style="left:233px;top:964px;" width="5" height="8" viewBox="0 0 5 8"><path d="M5 0 L5 8 L0.5 4 Z" fill="#c0c0c0"/></svg>
<div class="a" style="left:248px;top:964px;width:1617px;height:8px;border-radius:4px;background:#d6d6d6"></div>
<div class="a" style="left:248px;top:964px;width:1228px;height:8px;border-radius:4px;background:#9b9b9b"></div>
<svg class="a" style="left:1876px;top:964px;" width="5" height="8" viewBox="0 0 5 8"><path d="M0 0 L0 8 L4.5 4 Z" fill="#444"/></svg>
<div class="t" style="left:213px;top:999px;font-size:13px;line-height:15px;color:#4e4e4e;font-weight:normal;">Комментарий:</div>
<div class="a" style="left:335px;top:995px;width:410px;height:25px;border:1px solid #9e9e9e;border-radius:2px;background:#fff"></div>
<div class="a" style="left:723px;top:996px;width:1px;height:23px;background:#9e9e9e"></div>
<div class="t" style="left:729px;top:1001px;font-size:11px;line-height:12px;color:#3a3a3a;font-weight:normal;">...</div>
<div class="t" style="left:755px;top:999px;font-size:13px;line-height:15px;color:#4e4e4e;font-weight:normal;">Ответственный:</div>
<div class="a" style="left:854px;top:995px;width:410px;height:25px;border:1px solid #9e9e9e;border-radius:2px;background:#fff"></div>
<div class="a" style="left:1221px;top:996px;width:1px;height:23px;background:#9e9e9e"></div>
<div class="a" style="left:1242px;top:996px;width:1px;height:23px;background:#9e9e9e"></div>
<div class="t" style="left:858px;top:999px;font-size:13px;line-height:15px;color:#333;font-weight:normal;">admin</div>
<svg class="a" style="left:1229px;top:1005px;" width="6" height="4" viewBox="0 0 6 4"><path d="M0 0 L5.2 0 L2.6 3.2 Z" fill="#333"/></svg>
<svg class="a" style="left:1249px;top:1002px;" width="11" height="10" viewBox="0 0 11 10"><g fill="none" stroke="#333" stroke-width="1.25"><rect x="4.1" y="0.6" width="4.8" height="4.8"/><path d="M2.1 3.6 L0.6 3.6 L0.6 8.4 L5.4 8.4 L5.4 7"/></g></svg>
<div class="a" style="left:530px;top:510px;width:921px;height:338px;border:1px solid #a6a6a6;background:#fff;box-shadow:0 1px 6px rgba(0,0,0,.13)"></div>
<svg class="a" style="left:546px;top:522px;" width="18" height="17" viewBox="0 0 18 17"><path d="M9 1 L11.1 6.6 L17 6.8 L12.4 10.5 L14 16.2 L9 12.9 L4 16.2 L5.6 10.5 L1 6.8 L6.9 6.6 Z" fill="none" stroke="#a8a8a8" stroke-width="0.9"/></svg>
<div class="t" style="left:575px;top:520px;font-size:19px;line-height:21px;color:#6a6a6a;font-weight:normal;">Подарки (Начисление зарплаты)</div>
<div class="ybtn" style="left:543px;top:553px;width:177px;height:26px"></div>
<div class="t" style="left:557px;top:559px;font-size:13px;line-height:15px;color:#464646;font-weight:bold;">Записать и закрыть</div>
<div class="t" style="left:543px;top:593px;font-size:13px;line-height:15px;color:#4e4e4e;font-weight:normal;">Наименование:</div>
<div class="a" style="left:640px;top:589px;width:360px;height:25px;border:1px solid #9e9e9e;border-radius:2px;background:#fff"></div>
<div class="t" style="left:644px;top:593px;font-size:13px;line-height:15px;color:#333;font-weight:normal;">Подарки</div>
<div class="t" style="left:543px;top:630px;font-size:12px;line-height:14px;color:#7d735e;font-weight:bold;">Налоги и взносы</div>
<div class="t" style="left:543px;top:653px;font-size:13px;line-height:15px;color:#4e4e4e;font-weight:normal;">Вид начисления оплаты</div>
<div class="t" style="left:543px;top:687px;font-size:13px;line-height:15px;color:#4e4e4e;font-weight:normal;">Подоходный налог:</div>
<div class="t" style="left:543px;top:721px;font-size:13px;line-height:15px;color:#4e4e4e;font-weight:normal;">Страховые взносы:</div>
<div class="t" style="left:543px;top:755px;font-size:13px;line-height:15px;color:#4e4e4e;font-weight:normal;">Вид выплат для ПУ-3:</div>
<div class="a" style="left:544px;top:785px;width:15px;height:15px;border:1px solid #9e9e9e;border-radius:2px;background:#fff"></div>
<div class="t" style="left:565px;top:785px;font-size:13px;line-height:15px;color:#4e4e4e;font-weight:normal;">Доход в натуральной форме</div>
<div class="t" style="left:543px;top:815px;font-size:13px;line-height:15px;color:#4e4e4e;font-weight:normal;">Категория начисления или неначисления</div>
<div class="a" style="left:859px;top:810px;width:180px;height:25px;border:1px solid #9e9e9e;border-radius:2px;background:#fff"></div>
<div class="a" style="left:1017px;top:811px;width:1px;height:23px;background:#9e9e9e"></div>
<div class="a" style="left:1053px;top:826px;width:1px;height:8px;background:#bbb"></div>
<div class="a" style="left:807px;top:828px;width:1px;height:3px;background:#a08060"></div>
<div class="a" style="left:874px;top:828px;width:1px;height:3px;background:#6080a0"></div>
<svg class="a" style="left:1395px;top:527px;" width="9" height="9" viewBox="0 0 9 9"><rect x="0.6" y="0.6" width="7.8" height="7.8" fill="none" stroke="#333" stroke-width="1.2"/></svg>
<svg class="a" style="left:1425px;top:525px;" width="11" height="11" viewBox="0 0 11 11"><path d="M0.5 0.5 L10.5 10.5 M10.5 0.5 L0.5 10.5" stroke="#333" stroke-width="1.1"/></svg>
<div class="btn" style="left:1401px;top:553px;width:30px;height:26px"></div>
<div class="t" style="left:1401px;top:559px;width:30px;text-align:center;font-size:14px;line-height:15px;font-weight:bold;color:#464646">?</div>
<div class="a" style="left:1100px;top:646px;width:334px;height:30px;border:2px solid #f3c11b;background:#fff"></div>
<div class="a" style="left:1409px;top:651px;width:1px;height:20px;background:#666"></div>
<svg class="a" style="left:1395px;top:658px;" width="6" height="4" viewBox="0 0 6 4"><path d="M0 0 L5.2 0 L2.6 3.2 Z" fill="#333"/></svg>
<svg class="a" style="left:1416px;top:655px;" width="11" height="10" viewBox="0 0 11 10"><g fill="none" stroke="#333" stroke-width="1.25"><rect x="4.1" y="0.6" width="4.8" height="4.8"/><path d="M2.1 3.6 L0.6 3.6 L0.6 8.4 L5.4 8.4 L5.4 7"/></g></svg>
<div class="a" style="left:690px;top:219px;width:705px;height:609px;border:1px solid #959595;background:#fff;box-shadow:0 1px 6px rgba(0,0,0,.15)"></div>
<svg class="a" style="left:706px;top:232px;" width="18" height="17" viewBox="0 0 18 17"><path d="M9 1 L11.1 6.6 L17 6.8 L12.4 10.5 L14 16.2 L9 12.9 L4 16.2 L5.6 10.5 L1 6.8 L6.9 6.6 Z" fill="none" stroke="#a8a8a8" stroke-width="0.9"/></svg>
<div class="t" style="left:734px;top:230px;font-size:18.8px;line-height:21px;color:#000;font-weight:normal;">Подарки (Способ отражения зарплаты  в бухгалтерском ...</div>
<svg class="a" style="left:1272px;top:231px;" width="17" height="17" viewBox="0 0 17 17"><g fill="none" stroke="#555" stroke-width="1.2" transform="translate(8.5 8.5) scale(1.12) translate(-8.5 -8.5)"><path d="M6.5 10.5 L10.5 6.5"/><path d="M5.5 8.2 L2.8 10.9 A2.4 2.4 0 0 0 6.1 14.2 L8.8 11.5"/><path d="M8.2 5.5 L10.9 2.8 A2.4 2.4 0 0 1 14.2 6.1 L11.5 8.8"/></g></svg>
<svg class="a" style="left:1311px;top:235.5px;" width="3" height="3" viewBox="0 0 3 3"><circle cx="1.5" cy="1.5" r="1.3" fill="#7b7565"/></svg>
<svg class="a" style="left:1311px;top:239.5px;" width="3" height="3" viewBox="0 0 3 3"><circle cx="1.5" cy="1.5" r="1.3" fill="#7b7565"/></svg>
<svg class="a" style="left:1311px;top:243.5px;" width="3" height="3" viewBox="0 0 3 3"><circle cx="1.5" cy="1.5" r="1.3" fill="#7b7565"/></svg>
<svg class="a" style="left:1339px;top:236px;" width="10" height="10" viewBox="0 0 10 10"><rect x="0.6" y="0.6" width="7.9" height="7.9" fill="none" stroke="#333" stroke-width="1.2"/></svg>
<svg class="a" style="left:1369px;top:235px;" width="11" height="11" viewBox="0 0 11 11"><path d="M0.5 0.8 L10 10.2 M10 0.8 L0.5 10.2" stroke="#333" stroke-width="1.1"/></svg>
<div class="ybtn" style="left:703px;top:263px;width:160px;height:26px"></div>
<div class="t" style="left:703px;top:269px;width:160px;text-align:center;font-size:13px;line-height:15px;font-weight:bold;color:#464646">Записать и закрыть</div>
<div class="btn" style="left:872px;top:263px;width:83px;height:26px"></div>
<div class="t" style="left:872px;top:269px;width:83px;text-align:center;font-size:13px;line-height:15px;font-weight:normal;color:#3a3a3a">Записать</div>
<div class="btn" style="left:1275px;top:263px;width:61px;height:26px"></div>
<div class="t" style="left:1289px;top:269px;font-size:13px;line-height:15px;color:#3a3a3a;font-weight:normal;">Еще</div>
<svg class="a" style="left:1324px;top:276px;" width="6" height="4" viewBox="0 0 6 4"><path d="M0 0 L5.2 0 L2.6 3.2 Z" fill="#333"/></svg>
<div class="btn" style="left:1345px;top:263px;width:30px;height:26px"></div>
<div class="t" style="left:1345px;top:269px;width:30px;text-align:center;font-size:14px;line-height:15px;font-weight:bold;color:#464646">?</div>
<div class="t" style="left:703px;top:303px;font-size:13px;line-height:15px;color:#4e4e4e;font-weight:normal;">Наименование:</div>
<div class="a" style="left:797px;top:296px;width:417px;height:31px;border:2px solid #f3c11b;background:#fff"></div>
<div class="a" style="left:804px;top:303px;width:51px;height:16px;background:#3f68cf"></div>
<div class="t" style="left:804px;top:304px;font-size:13px;line-height:15px;color:#fff;font-weight:normal;">Подарки</div>
<div class="t" style="left:1221px;top:304px;font-size:13px;line-height:15px;color:#4e4e4e;font-weight:normal;">Код:</div>
<div class="a" style="left:1254px;top:299px;width:90px;height:25px;border:1px solid #c4c4c4;border-radius:2px;background:#fff"></div>
<div class="t" style="left:1258px;top:304px;font-size:13px;line-height:15px;color:#333;font-weight:normal;">00-00007</div>
<div class="t" style="left:703px;top:334px;font-size:15.5px;line-height:17px;color:#129b56;font-weight:normal;">Основная система налогообложения</div>
<div class="t" style="left:703px;top:356px;font-size:13px;line-height:15px;color:#4e4e4e;font-weight:normal;">Счет:</div>
<div class="a" style="left:863px;top:356px;width:133px;height:24px;border:1px solid #9e9e9e;border-radius:2px;background:#fff"></div>
<div class="a" style="left:953px;top:357px;width:1px;height:22px;background:#9e9e9e"></div>
<div class="a" style="left:974px;top:357px;width:1px;height:22px;background:#9e9e9e"></div>
<div class="t" style="left:867px;top:360px;font-size:13px;line-height:15px;color:#333;font-weight:normal;">90.10</div>
<svg class="a" style="left:960px;top:365px;" width="6" height="4" viewBox="0 0 6 4"><path d="M0 0 L5.2 0 L2.6 3.2 Z" fill="#333"/></svg>
<svg class="a" style="left:981px;top:362px;" width="11" height="10" viewBox="0 0 11 10"><g fill="none" stroke="#333" stroke-width="1.25"><rect x="4.1" y="0.6" width="4.8" height="4.8"/><path d="M2.1 3.6 L0.6 3.6 L0.6 8.4 L5.4 8.4 L5.4 7"/></g></svg>
<div class="t" style="left:703px;top:381px;font-size:13px;line-height:15px;color:#4e4e4e;font-weight:normal;">Номенклатурные груп...</div>
<div class="a" style="left:863px;top:390px;width:182px;height:24px;border:1px solid #9e9e9e;border-radius:2px;background:#fff"></div>
<div class="a" style="left:1002px;top:391px;width:1px;height:22px;background:#9e9e9e"></div>
<div class="a" style="left:1023px;top:391px;width:1px;height:22px;background:#9e9e9e"></div>
<div class="t" style="left:867px;top:394px;font-size:13px;line-height:15px;color:#333;font-weight:normal;">условная выручка</div>
<svg class="a" style="left:1009px;top:399px;" width="6" height="4" viewBox="0 0 6 4"><path d="M0 0 L5.2 0 L2.6 3.2 Z" fill="#333"/></svg>
<svg class="a" style="left:1030px;top:396px;" width="11" height="10" viewBox="0 0 11 10"><g fill="none" stroke="#333" stroke-width="1.25"><rect x="4.1" y="0.6" width="4.8" height="4.8"/><path d="M2.1 3.6 L0.6 3.6 L0.6 8.4 L5.4 8.4 L5.4 7"/></g></svg>
<div class="a" style="left:698px;top:354px;width:297px;height:27px;border:3px solid #d9463e;border-radius:3px"></div>
<div class="a" style="left:861px;top:389px;width:184px;height:26px;border:3px solid #d9463e;border-radius:3px"></div>
<svg class="a" style="left:1050px;top:393px;" width="62" height="16" viewBox="0 0 62 16"><path d="M14 8 L61 8" stroke="#d9513f" stroke-width="2.6"/><path d="M2.5 8 L16 2 L13 8 L16 14 Z" fill="#d9513f"/></svg>
<div class="t" style="left:1116px;top:380px;font-size:18px;line-height:20px;color:#d9513f;font-weight:normal;">Из документа</div>
<div class="t" style="left:1116px;top:402px;font-size:18px;line-height:20px;color:#d9513f;font-weight:normal;">Реализации товаров и услуг</div>
<div class="t" style="left:703px;top:462px;font-size:15.5px;line-height:17px;color:#129b56;font-weight:normal;">Счет для отражения страховых взносов</div>
<div class="t" style="left:703px;top:484px;font-size:13px;line-height:15px;color:#4e4e4e;font-weight:normal;">Счет:</div>
<div class="a" style="left:863px;top:483px;width:133px;height:25px;border:1px solid #9e9e9e;border-radius:2px;background:#fff"></div>
<div class="a" style="left:953px;top:484px;width:1px;height:23px;background:#9e9e9e"></div>
<div class="a" style="left:974px;top:484px;width:1px;height:23px;background:#9e9e9e"></div>
<div class="t" style="left:867px;top:488px;font-size:13px;line-height:15px;color:#333;font-weight:normal;">90.10</div>
<svg class="a" style="left:960px;top:493px;" width="6" height="4" viewBox="0 0 6 4"><path d="M0 0 L5.2 0 L2.6 3.2 Z" fill="#333"/></svg>
<svg class="a" style="left:981px;top:490px;" width="11" height="10" viewBox="0 0 11 10"><g fill="none" stroke="#333" stroke-width="1.25"><rect x="4.1" y="0.6" width="4.8" height="4.8"/><path d="M2.1 3.6 L0.6 3.6 L0.6 8.4 L5.4 8.4 L5.4 7"/></g></svg>
<div class="t" style="left:703px;top:510px;font-size:13px;line-height:15px;color:#4e4e4e;font-weight:normal;">Номенклатурные груп...</div>
<div class="a" style="left:863px;top:517px;width:182px;height:25px;border:1px solid #9e9e9e;border-radius:2px;background:#fff"></div>
<div class="a" style="left:1002px;top:518px;width:1px;height:23px;background:#9e9e9e"></div>
<div class="a" style="left:1023px;top:518px;width:1px;height:23px;background:#9e9e9e"></div>
<div class="t" style="left:867px;top:522px;font-size:13px;line-height:15px;color:#333;font-weight:normal;">условная выручка</div>
<svg class="a" style="left:1009px;top:527px;" width="6" height="4" viewBox="0 0 6 4"><path d="M0 0 L5.2 0 L2.6 3.2 Z" fill="#333"/></svg>
<svg class="a" style="left:1030px;top:524px;" width="11" height="10" viewBox="0 0 11 10"><g fill="none" stroke="#333" stroke-width="1.25"><rect x="4.1" y="0.6" width="4.8" height="4.8"/><path d="M2.1 3.6 L0.6 3.6 L0.6 8.4 L5.4 8.4 L5.4 7"/></g></svg>
<div class="t" style="left:703px;top:589px;font-size:15.5px;line-height:17px;color:#129b56;font-weight:normal;">Налоговый учет страховых взносов (по налогу на</div>
<div class="t" style="left:703px;top:607px;font-size:15.5px;line-height:17px;color:#129b56;font-weight:normal;">прибыль)</div>
<div class="t" style="left:703px;top:631px;font-size:13px;line-height:15px;color:#4e4e4e;font-weight:normal;">Счет:</div>
<div class="a" style="left:863px;top:629px;width:133px;height:25px;border:1px solid #d4d4d4;border-radius:2px;background:#fff"></div>
<div class="a" style="left:953px;top:630px;width:1px;height:23px;background:#d4d4d4"></div>
<div class="a" style="left:974px;top:630px;width:1px;height:23px;background:#d4d4d4"></div>
<svg class="a" style="left:960px;top:639px;" width="6" height="4" viewBox="0 0 6 4"><path d="M0 0 L5.2 0 L2.6 3.2 Z" fill="#b0b0b0"/></svg>
<svg class="a" style="left:981px;top:636px;" width="11" height="10" viewBox="0 0 11 10"><g fill="none" stroke="#b0b0b0" stroke-width="1.25"><rect x="4.1" y="0.6" width="4.8" height="4.8"/><path d="M2.1 3.6 L0.6 3.6 L0.6 8.4 L5.4 8.4 L5.4 7"/></g></svg>
<div class="t" style="left:703px;top:739px;font-size:13px;line-height:15px;color:#8a7b5c;font-weight:normal;">Порядок отражения страховых взносов в БУ и НУ совпадает</div>
</body></html>
